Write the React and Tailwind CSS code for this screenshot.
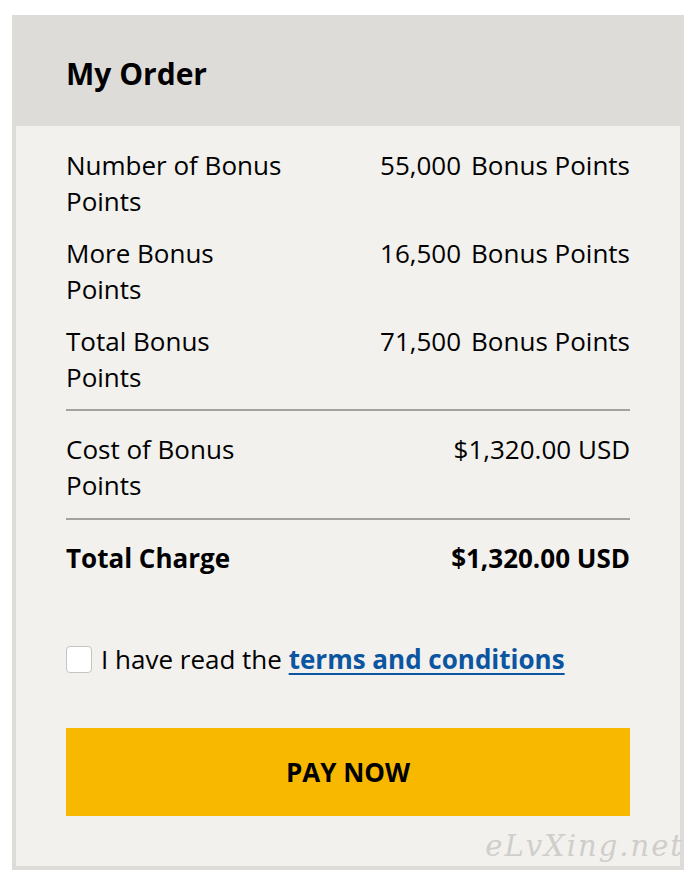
import React from 'react'

const font = { fontFamily: '"Open Sans", "Noto Sans", sans-serif' }

function Row({ label, value, bold }) {
  return (
    <div className={`flex justify-between items-start text-[26px] leading-[36px] text-black ${bold ? 'font-bold' : ''}`}>
      <div className="w-[222px]">{label}</div>
      <div className="text-right">{value}</div>
    </div>
  )
}

function Points({ n }) {
  return (
    <span>
      {n}
      <span className="ml-[10px]">Bonus Points</span>
    </span>
  )
}

export default function App() {
  return (
    <div className="w-[696px] h-[882px] bg-white pt-[15px] pl-[12px]" style={font}>
      <div className="relative w-[672px] bg-[#dddcd9] px-[4px] pb-[4px]">
        <div className="h-[111px] flex items-center pl-[50px] pt-[6px]">
          <h1 className="text-[30px] font-bold text-black">My Order</h1>
        </div>
        <div className="bg-[#f2f1ee] px-[50px] pt-[21px] pb-[50px]">
          <div className="flex flex-col gap-4">
            <Row label="Number of Bonus Points" value={<Points n="55,000" />} />
            <Row label="More Bonus Points" value={<Points n="16,500" />} />
            <Row label="Total Bonus Points" value={<Points n="71,500" />} />
          </div>
          <div className="h-[2px] bg-[#a3a2a0] mt-[14px] mb-[20px]" />
          <Row label="Cost of Bonus Points" value="$1,320.00 USD" />
          <div className="h-[2px] bg-[#a3a2a0] mt-[15px] mb-[20px]" />
          <Row label="Total Charge" value="$1,320.00 USD" bold />
          <div className="flex items-center mt-[65px] text-[26px] leading-[36px] text-black">
            <span className="w-[26px] h-[27px] rounded-[4px] border border-[#c4c4c4] bg-white mr-[9px] shrink-0" />
            <span>
              I have read the{' '}
              <a className="font-bold text-[#0b55a1] underline underline-offset-[4px] decoration-2">terms and conditions</a>
            </span>
          </div>
          <button className="mt-[51px] w-full h-[88px] bg-[#f9b800] text-[26px] font-bold text-black">
            PAY NOW
          </button>
        </div>
        <div
          className="absolute right-[0px] bottom-[2px] text-[29px] italic text-[#cfcecb] tracking-[2px]"
          style={{ fontFamily: '"DejaVu Serif", serif' }}
        >
          eLvXing.net
        </div>
      </div>
    </div>
  )
}
